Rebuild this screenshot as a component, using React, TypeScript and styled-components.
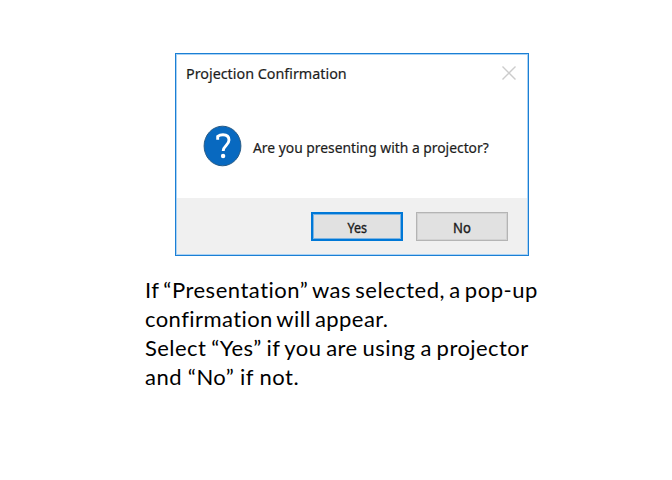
import React from "react";
import styled, { createGlobalStyle } from "styled-components";

const GlobalStyle = createGlobalStyle`
  * { box-sizing: border-box; }
  body { margin: 0; background: #fff; }
`;

const Page = styled.main`
  width: 672px;
  height: 480px;
  padding: 53px 0 0 145px;
  overflow: hidden;
  background: #fff;
`;

const Dialog = styled.section`
  display: flex;
  flex-direction: column;
  width: 354px;
  height: 203px;
  margin-left: 30px;
  border: 1px solid #1b7fd4;
  box-shadow: inset 0 0 0 1px #a9d2f5;
  font-family: "Noto Sans", "Open Sans", sans-serif;
  color: #1c1c1c;
`;

const Fit = styled.span<{ $scale: number }>`
  display: inline-block;
  white-space: nowrap;
  transform: scaleX(${(p) => p.$scale});
  transform-origin: 0 50%;
  -webkit-text-stroke: 0.2px currentColor;
`;

const TitleBar = styled.header`
  display: flex;
  justify-content: space-between;
  height: 42px;
  padding: 9px 12px 0 10px;
  font-size: 15px;
  line-height: 20px;
`;

const CloseIcon = styled.svg`
  width: 14px;
  height: 14px;
  margin-top: 3px;
`;

const Message = styled.div`
  display: flex;
  flex: 1;
  padding: 29px 0 0 27px;
  gap: 10px;
  font-size: 15px;
  line-height: 20px;
`;

const QuestionIcon = styled.svg`
  width: 40px;
  height: 42px;
  flex: none;
`;

const MessageText = styled.div`
  padding-top: 12px;
`;

const Footer = styled.footer`
  display: flex;
  justify-content: flex-end;
  gap: 13px;
  height: 56px;
  margin: 0 1px 1px;
  padding: 14px 19px 0 0;
  background: #f0f0f0;
`;

const Button = styled.button<{ $primary?: boolean }>`
  width: 92px;
  height: 29px;
  padding: 0;
  border: ${(p) => (p.$primary ? "2px solid #0078d7" : "1px solid #b4b4b4")};
  box-shadow: inset 0 0 0 1px ${(p) => (p.$primary ? "#7db4e2" : "#d2d2d2")};
  background: #e1e1e1;
  color: #1c1c1c;
  font: 14.5px/20px "Noto Sans", "Open Sans", sans-serif;
  ${Fit} {
    transform-origin: 50% 50%;
    -webkit-text-stroke-width: 0.4px;
  }
`;

const Caption = styled.div`
  margin-top: 19px;
  font: 22px/29px Lato, sans-serif;
  color: #000;
`;

const Line = styled.div<{ $letter: number; $word: number }>`
  height: 29px;
  white-space: nowrap;
  letter-spacing: ${(p) => p.$letter}px;
  word-spacing: ${(p) => p.$word}px;
`;

export default function App() {
  return (
    <Page>
      <GlobalStyle />
      <Dialog role="dialog" aria-label="Projection Confirmation">
        <TitleBar>
          <Fit $scale={0.955}>Projection Confirmation</Fit>
          <CloseIcon viewBox="0 0 14 14" aria-label="Close">
            <path d="M0.5 0.5 13.5 13.5M13.5 0.5 0.5 13.5" stroke="#ccc" strokeWidth="1.4" />
          </CloseIcon>
        </TitleBar>
        <Message>
          <QuestionIcon viewBox="0 0 40 42">
            <ellipse cx="19.5" cy="21" rx="18.4" ry="19.8" fill="#0869c0" stroke="#265a86" strokeWidth="1" />
            <path
              d="M14.7 14.8V11.4Q16.8 9.8 20 9.8C24 9.8 26 12 26 15.1C26 20.4 20.2 20.6 20.2 26"
              fill="none"
              stroke="#fff"
              strokeWidth="2.9"
            />
            <circle cx="20.1" cy="31" r="2.2" fill="#fff" />
          </QuestionIcon>
          <MessageText>
            <Fit $scale={0.923}>Are you presenting with a projector?</Fit>
          </MessageText>
        </Message>
        <Footer>
          <Button $primary><Fit $scale={0.86}>Yes</Fit></Button>
          <Button><Fit $scale={0.9}>No</Fit></Button>
        </Footer>
      </Dialog>
      <Caption>
        <Line $letter={0.52} $word={-2}>If “Presentation” was selected, a pop-up</Line>
        <Line $letter={0.42} $word={-2}>confirmation will appear.</Line>
        <Line $letter={0.44} $word={-1.2}>Select “Yes” if you are using a projector</Line>
        <Line $letter={0.5} $word={-0.3}>and “No” if not.</Line>
      </Caption>
    </Page>
  );
}
